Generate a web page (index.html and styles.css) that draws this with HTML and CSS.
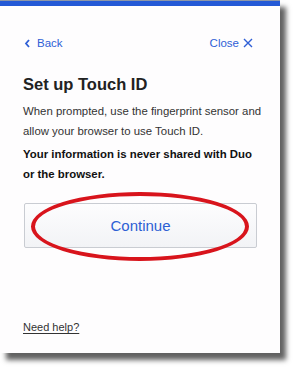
FILE: index.html
```html
<!DOCTYPE html>
<html>
<head>
<meta charset="utf-8">
<link rel="stylesheet" href="styles.css">
</head>
<body>
<div class="card">
  <div class="topbar"></div>
  <div class="content">
    <div class="nav">
      <a class="back"><svg class="chev" width="7" height="9" viewBox="0 0 7 9"><path d="M5 1 L2 4.5 L5 8" fill="none" stroke="#2f5fd6" stroke-width="1.8"/></svg>Back</a>
      <a class="close">Close<svg class="x" width="10" height="10" viewBox="0 0 10 10"><path d="M1 1 L9 9 M9 1 L1 9" fill="none" stroke="#2f5fd6" stroke-width="1.4"/></svg></a>
    </div>
    <h1 class="title">Set up Touch ID</h1>
    <p class="text">When prompted, use the fingerprint sensor and allow your browser to use Touch ID.</p>
    <p class="text bold">Your information is never shared with Duo or the browser.</p>
    <div class="btnwrap">
      <button class="btn">Continue</button>
      <div class="ring"></div>
    </div>
    <a class="help">Need help?</a>
  </div>
</div>
</body>
</html>
```
FILE: styles.css
```css
html, body {
  margin: 0;
  padding: 0;
  background: #ffffff;
}
body {
  font-family: "Liberation Sans", Arial, sans-serif;
  width: 300px;
  height: 373px;
  overflow: hidden;
}
.card {
  width: 280px;
  height: 353px;
  background: #fefdfe;
  box-shadow: 6px 7px 5px rgba(0, 0, 0, 0.62);
  display: flex;
  flex-direction: column;
}
.topbar {
  height: 5px;
  background: #2459d6;
  border-top: 1px solid #8d97a8;
}
.content {
  padding: 0 14px 0 23px;
  display: flex;
  flex-direction: column;
  flex: 1;
}
.nav {
  display: flex;
  justify-content: space-between;
  align-items: center;
  margin-top: 30px;
  margin-right: 10px;
  height: 14px;
  font-size: 11.5px;
  color: #2f5fd6;
}
.back, .close {
  display: flex;
  align-items: center;
}
.chev { margin-right: 6px; margin-left: 1px; }
.x { margin-left: 4px; }
.close { margin-right: 3px; }
.title {
  margin: 24px 0 0 0;
  font-size: 16.5px;
  font-weight: bold;
  color: #222;
  line-height: 20px;
}
.text {
  margin: 8px 0 0 0;
  font-size: 11.4px;
  line-height: 19.5px;
  color: #333;
}
.text.bold {
  margin-top: 4px;
  margin-right: 10px;
  font-weight: bold;
  color: #111;
}
.btnwrap {
  position: relative;
  margin-top: 19px;
  height: 45px;
}
.btn {
  width: 233px;
  height: 45px;
  margin-left: 1px;
  border: 1px solid #c9ccd2;
  border-radius: 2px;
  background: linear-gradient(#fdfdfe, #f2f3f6);
  color: #2d5fd4;
  font-family: "Liberation Sans", Arial, sans-serif;
  font-size: 15px;
}
.ring {
  position: absolute;
  left: 8px;
  top: -11px;
  width: 210px;
  height: 61px;
  border: 4px solid #d8141c;
  border-radius: 50%;
  pointer-events: none;
}
.help {
  margin-top: auto;
  margin-bottom: 20px;
  font-size: 11px;
  color: #333;
  text-decoration: underline;
  text-underline-offset: 2px;
  align-self: flex-start;
}
```
